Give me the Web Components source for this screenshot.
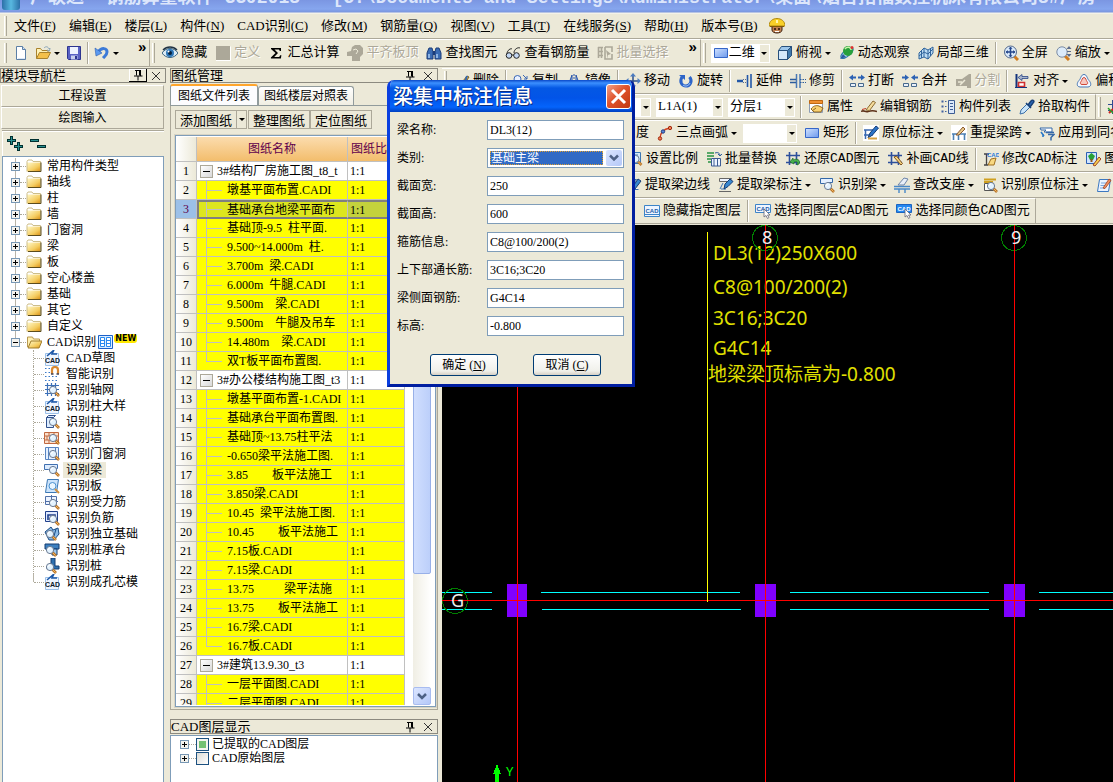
<!DOCTYPE html>
<html lang="zh-CN">
<head>
<meta charset="utf-8">
<title>广联达 钢筋算量软件 GGJ2013</title>
<style>
html, body {
    margin: 0;
    height: 100%;
    overflow: hidden;
}
body {
    background: #ece9d8;
    color: #000;
    font: 12px/16px "Liberation Serif", "Noto Sans CJK SC", serif;
}
</style>
</head>
<body>
<app-shell>
    <title-strip slot="title">广联达  钢筋算量软件 GGJ2013 - [C:\Documents and Settings\Administrator\桌面\烟台拓福数控机床有限公司3#厂房</title-strip>
    <menu-bar slot="menu"></menu-bar>

    <tool-row slot="tools">
        <tool-band>
            <tool-button icon="new" label="新建"></tool-button>
            <tool-button icon="open" label="打开" drop></tool-button>
            <tool-button icon="save" label="保存"></tool-button>
            <tool-sep></tool-sep>
            <tool-button icon="undo" label="撤销" drop></tool-button>
            <tool-more></tool-more>
        </tool-band>
        <tool-band>
            <tool-button icon="eye">隐藏</tool-button>
            <tool-button icon="graybox" disabled>定义</tool-button>
            <tool-button icon="sigma">汇总计算</tool-button>
            <tool-button icon="hand" disabled>平齐板顶</tool-button>
            <tool-button icon="binoculars">查找图元</tool-button>
            <tool-button icon="glasses">查看钢筋量</tool-button>
            <tool-button icon="batch" disabled>批量选择</tool-button>
            <tool-more></tool-more>
        </tool-band>
        <tool-band open>
            <tool-combo icon="rect" value="二维" style="--w:59px"></tool-combo>
            <tool-button icon="cube" drop>俯视</tool-button>
            <tool-button icon="orbit">动态观察</tool-button>
            <tool-button icon="part3d">局部三维</tool-button>
            <tool-sep></tool-sep>
            <tool-button icon="fullscreen">全屏</tool-button>
            <tool-button icon="zoom" drop>缩放</tool-button>
        </tool-band>
    </tool-row>

    <nav-panel slot="nav"></nav-panel>

    <side-stack slot="side">
        <drawing-panel></drawing-panel>
        <layer-panel></layer-panel>
    </side-stack>

    <work-area slot="work">
        <tool-row>
            <tool-band open>
                <tool-button icon="pen">删除</tool-button>
                <tool-sep></tool-sep>
                <tool-button icon="copy">复制</tool-button>
                <tool-button icon="mirror">镜像</tool-button>
                <tool-sep></tool-sep>
                <tool-button icon="move">移动</tool-button>
                <tool-button icon="rotate">旋转</tool-button>
                <tool-sep></tool-sep>
                <tool-button icon="extend">延伸</tool-button>
                <tool-button icon="trim">修剪</tool-button>
                <tool-sep></tool-sep>
                <tool-button icon="break">打断</tool-button>
                <tool-button icon="join">合并</tool-button>
                <tool-button icon="split" disabled>分割</tool-button>
                <tool-sep></tool-sep>
                <tool-button icon="align" drop>对齐</tool-button>
                <tool-button icon="offset">偏移</tool-button>
            </tool-band>
        </tool-row>
        <tool-row>
            <tool-band lead style="--lead:140px">
                <tool-combo label="构件类型" value="" style="--w:67px"></tool-combo>
                <tool-combo label="构件" value="L1A(1)" style="--w:67px"></tool-combo>
                <tool-combo label="分层" value="分层1" style="--w:67px"></tool-combo>
                <tool-sep></tool-sep>
                <tool-button icon="props">属性</tool-button>
                <tool-button icon="editbar">编辑钢筋</tool-button>
                <tool-button icon="list">构件列表</tool-button>
                <tool-button icon="dropper">拾取构件</tool-button>
            </tool-band>
            <tool-band open>
                <tool-button icon="axis" label="轴线"></tool-button>
            </tool-band>
        </tool-row>
        <tool-row>
            <tool-band open lead style="--lead:177px">
                <tool-button>角度</tool-button>
                <tool-button icon="arc" drop>三点画弧</tool-button>
                <tool-combo label="画弧方式" value="" style="--w:54px"></tool-combo>
                <tool-button icon="rect">矩形</tool-button>
                <tool-sep></tool-sep>
                <tool-button icon="notepen" drop>原位标注</tool-button>
                <tool-button icon="span" drop>重提梁跨</tool-button>
                <tool-button icon="apply">应用到同名梁</tool-button>
            </tool-band>
        </tool-row>
        <tool-row>
            <tool-band open lead style="--lead:181px">
                <tool-button icon="scale">设置比例</tool-button>
                <tool-button icon="replace">批量替换</tool-button>
                <tool-button icon="restore">还原CAD图元</tool-button>
                <tool-button icon="gridpen">补画CAD线</tool-button>
                <tool-sep></tool-sep>
                <tool-button icon="cadedit">修改CAD标注</tool-button>
                <tool-button icon="picedit">图片管理</tool-button>
            </tool-band>
        </tool-row>
        <tool-row>
            <tool-band open lead style="--lead:180px">
                <tool-button icon="edgepick">提取梁边线</tool-button>
                <tool-button icon="notepick" drop>提取梁标注</tool-button>
                <tool-button icon="beamfind" drop>识别梁</tool-button>
                <tool-button icon="support" drop>查改支座</tool-button>
                <tool-button icon="notefind" drop>识别原位标注</tool-button>
                <tool-button icon="pageedit">梁原位标注</tool-button>
            </tool-band>
        </tool-row>
        <tool-row>
            <tool-band lead style="--lead:198px">
                <tool-button icon="cadbox">隐藏指定图层</tool-button>
                <tool-sep></tool-sep>
                <tool-button icon="cadpick">选择同图层CAD图元</tool-button>
                <tool-button icon="cadpickblue">选择同颜色CAD图元</tool-button>
            </tool-band>
        </tool-row>
        <cad-canvas slot="canvas"></cad-canvas>
    </work-area>

    <beam-dialog slot="dialog" heading="梁集中标注信息"></beam-dialog>
</app-shell>

<script>
// small magnifier shared by the "识别" icons
const mag = (x, y) => `<path d="M${x + 2} ${y + 2}l4 4" stroke="#b8752a" stroke-width="2.6"/><path d="M${x + 3} ${y + 3}l2.6 2.6" stroke="#f4b860" stroke-width="1"/><circle cx="${x}" cy="${y}" r="3.6" fill="#e4f3ff" stroke="#6a7a92"/><path d="M${x - 2} ${y}a2 2 0 0 1 2-2" stroke="#fff" fill="none"/>`;
const cadTag = (x, y, c) => `<text x="${x}" y="${y}" font-family="Liberation Sans" font-size="6" font-weight="bold" fill="${c}">CAD</text>`;
const gridLines = '<path d="M4.5 1v13M11.5 1v13M1 4.5h14M1 11.5h14" stroke="#2c4f9c" stroke-width="1.6"/>';

const ICONS = {
    new: '<path d="M3.5 1.500h6l3 3v10h-9z" fill="#fff" stroke="#5b7fa6"/><path d="M9.500 1.500v3h3" fill="#cfe0f4" stroke="#5b7fa6"/><path d="M5 13.500h7" stroke="#dbe8f8"/>',
    open: '<path d="M1.500 13.500v-10h4l1.500 2h6v3" fill="#fff3b8" stroke="#a9822c"/><path d="M1.500 13.500l3-6h11l-3 6z" fill="#f4c04a" stroke="#a9822c"/><path d="M9 3c2-2 4-1.500 5 1l1-1-.5 3-2.500-1" fill="none" stroke="#8aa4b8"/>',
    save: '<path d="M1.500 1.500h13v13h-12l-1-1z" fill="#5a62c4" stroke="#2d3590"/><path d="M4 2h8v7h-8z" fill="#eef3ff"/><path d="M5 10.500h6.500v4h-6.500z" fill="#c9d0ee"/><path d="M9 11h2v3h-2z" fill="#2d3590"/>',
    undo: '<path d="M4 7c4-5 9-4 9 0 0 3-2 4-4 6" fill="none" stroke="#3d7bd8" stroke-width="3"/><path d="M1 3l1 8 6-3z" fill="#5b9af0" stroke="#2a5cb0" stroke-width=".6"/>',
    eye: '<path d="M0 8c4-6 12-6 16 0-4 6-12 6-16 0z" fill="#dcebf4" stroke="#3c6480"/><circle cx="8" cy="8" r="4" fill="#2d77b8"/><circle cx="8" cy="8" r="2" fill="#06203c"/><circle cx="6.500" cy="6.500" r="1" fill="#fff"/><path d="M1 5c4-4 10-4 14 0" fill="none" stroke="#234" stroke-width="1.500"/>',
    graybox: '<path d="M1 1h14v14h-14z" fill="#aca899"/><path d="M1 15.500h14.500v-14" fill="none" stroke="#fff"/>',
    sigma: '<path d="M3 3h10v3h-1.200l-.8-1.500h-4.500l3.500 3.500-3.800 4h5l1-1.800h1.200l-.5 3.300h-10v-1l4.600-4.600-4.500-4z" fill="#000"/>',
    hand: '<path d="M0 7l4-1 1-4 3-2h5l3 3v6l-3 3v4h-8v-5h-5z" fill="#aca899"/><path d="M6 5l3-1 2 2-2 3" stroke="#ece9d8" fill="none"/>',
    binoculars: '<path d="M1 14v-6l2-5h3l1 4v7zM9 14v-7l1-4h3l2 5v6z" fill="#3a6cb4" stroke="#1c3c78"/><path d="M7 6h2v4h-2z" fill="#1c3c78"/><path d="M3 9v4M11 9v4" stroke="#a8ccf4" stroke-width="1.500"/>',
    glasses: '<path d="M2 9c0-4 4-6 5-5M9 8c0-4 4-6 6-5" fill="none" stroke="#222"/><circle cx="4" cy="10.500" r="2.800" fill="#c4d8f4" stroke="#222"/><circle cx="11.500" cy="10.500" r="2.800" fill="#c4d8f4" stroke="#222"/><path d="M6.500 10h2.500" stroke="#222"/>',
    batch: '<path d="M1.500 2v11M4.500 2v11M1 2.500h5M1 6.500h5M1 10.500h5M8 2h7v5M8 2v12h7v-5" fill="none" stroke="#aca899" stroke-width="1.600"/><path d="M9 5l5 4-3 1v4z" fill="#aca899"/>',
    rect: '<path d="M1.500 3.500h13v9h-13z" fill="url(#g)" stroke="#3566c8"/>',
    cube: '<path d="M1.500 5.500l3-4h10v9l-4 4h-9z" fill="#9cc6ec" stroke="#28507c"/><path d="M1.500 5.500h9v9h-9z" fill="#d4e8fa" stroke="#28507c"/><path d="M10.500 5.500l4-4v9l-4 4z" fill="#3f78ac" stroke="#28507c"/>',
    orbit: '<ellipse cx="8" cy="8" rx="7.500" ry="3" transform="rotate(-40 8 8)" fill="#b8dcf0" stroke="#2c7ab0"/><circle cx="9" cy="6" r="5" fill="#28a03c"/><path d="M6 4c2-3 6-2 6 1" stroke="#c8f4a8" fill="none" stroke-width="1.500"/><path d="M1 14l3-5 3 3z" fill="#2c5ca0"/><circle cx="13" cy="2.500" r="1.500" fill="#e03030"/>',
    part3d: '<path d="M1 8l5-5 4 2 5-3v6l-5 6-4-2-5 2z" fill="#bcdcf4" stroke="#30649c"/><path d="M6 3v9M10 5v9M1 11l5-4 4 2 5-5M3.500 6v7M12.500 4v7" fill="none" stroke="#30649c"/>',
    fullscreen: '<path d="M11 11l4 4" stroke="#d07c20" stroke-width="3"/><circle cx="7.500" cy="7" r="6" fill="#dcebfa" stroke="#52688c"/><path d="M7.500 2.500v9M3 7h9" stroke="#23468c" stroke-width="1.500"/><path d="M7.500 1.800l-2 2h4zM7.500 12.200l-2-2h4zM2.800 7l2-2v4zM12.200 7l-2-2v4z" fill="#23468c"/>',
    zoom: '<path d="M9 11l4 4" stroke="#d07c20" stroke-width="3"/><circle cx="6" cy="7" r="5.200" fill="#dcebfa" stroke="#7c8ca4"/><path d="M13 1l-2.500 3h5zM13 12l-2.500-3h5z" fill="#5c6c8c"/><path d="M11 6.500h4" stroke="#5c6c8c"/>',
    pen: '<path d="M5 13l8-10 2 1-6 9z" fill="#f8c440" stroke="#80601c"/><path d="M13 3l-3 9" stroke="#3468b0" stroke-width="2"/><path d="M5 13l4 0" stroke="#333"/>',
    copy: '<circle cx="4.500" cy="6" r="3.500" fill="#e8f0ff" stroke="#3866b4"/><circle cx="11" cy="11.500" r="3" fill="#c8dcf8" stroke="#3866b4"/><path d="M10 2l4 4M14 3v3h-3" fill="none" stroke="#3866b4"/>',
    mirror: '<path d="M6 2v11l-4 0zM10 2v11h4z" fill="#a8c8f4" stroke="#2854a8"/><path d="M8 1v14" stroke="#2854a8" stroke-dasharray="2 1"/>',
    move: '<path d="M8 2v12M2 8h12" stroke="#2c4f8c" stroke-width="1.500"/><path d="M8 0l-3 3.500h6zM8 16l-3-3.500h6zM0 8l3.500-3v6zM16 8l-3.500-3v6z" fill="#4c7cc0"/>',
    rotate: '<path d="M4 4c-3 5 0 9 4 9s7-5 3.500-9" fill="none" stroke="#2c64c8" stroke-width="3"/><path d="M1 2h6v5z" fill="#2c64c8"/><path d="M5 12c2 2 6 1 7-2" stroke="#a8ccff" fill="none"/>',
    extend: '<path d="M0 8h6" stroke="#2358a8" stroke-width="2.500"/><path d="M6 6.500h4M6 9.500h4" stroke="#5c6c8c" stroke-dasharray="1 1"/><path d="M10.500 2v12M14 1v14" stroke="#2358a8" stroke-width="1.600"/>',
    trim: '<path d="M6.500 1v14M10 1v14" stroke="#4878b4" stroke-width="1.500"/><path d="M0 6.500h6M0 9.500h6" stroke="#2c5c9c" stroke-width="1.300"/><path d="M10 6.500h6M10 9.500h6" stroke="#2c5c9c" stroke-dasharray="1.500 1"/>',
    break: '<path d="M0 4.500l4-3v2h3v2h-3v2zM16 4.500l-4-3v2h-3v2h3v2z" fill="#2c62b4"/><path d="M1.500 10.500h5v3h-5zM9.500 10.500h5v3h-5z" fill="#e8f0fa" stroke="#46688c"/>',
    join: '<path d="M7 4.500l-4-3v2h-3v2h3v2zM9 4.500l4-3v2h3v2h-3v2z" fill="#2c62b4"/><path d="M1.500 10.500h5v3h-5zM9.500 10.500h5v3h-5z" fill="#e8f0fa" stroke="#46688c"/>',
    split: '<path d="M1 6h6l7-5h2v14h-4v-2h-11z" fill="#aca899"/><path d="M3 9h4M5 12l5-5" stroke="#ece9d8" stroke-width="1.500" fill="none"/>',
    align: '<path d="M2.500 1v14" stroke="#14347c" stroke-width="2"/><path d="M4 4.500l4-3v2h6v2h-6v2z" fill="#a8b4cc" stroke="#14347c" stroke-width=".7"/><path d="M4.500 9.500h6v4h-6z" fill="#fff" stroke="#d03030" stroke-width="1.600"/><path d="M1 14.500h12" stroke="#14347c"/>',
    offset: '<path d="M8 1.500c3 0 3 4 5 6s3 6-1 6.500h-8c-4-.5-3-4.500-1-6.500s2-6 5-6z" fill="#f4f8ff" stroke="#4878b4"/><path d="M8 4.500c2 0 2 3 3 4s1 3-1 3h-4c-2 0-2-2-1-3s1-4 3-4z" fill="#f8c8c0" stroke="#d04838"/>',
    props: '<path d="M1.500 1.500h13v12h-13z" fill="#fff" stroke="#8c9cb4"/><path d="M1.500 1.500h13v3h-13z" fill="#f09030" stroke="#c06810"/><path d="M3 10c2-3 5-4 8-3l4 2-2 4h-7z" fill="#f8d070" stroke="#8c6420"/><path d="M4 12l4-3" stroke="#8c6420"/>',
    editbar: '<path d="M0 12.500c3-2 4 1 7 0s6-1 9 0" fill="none" stroke="#5c3018" stroke-width="1.500"/><path d="M5 11l7-9 2.500 1.500-6 8z" fill="#f4dc9c" stroke="#8a6a30"/><path d="M1 10.500l4-1" stroke="#c03820"/>',
    list: '<path d="M1.500 2.500h2M1.500 7.500h2M1.500 12.500h2" stroke="#4060a0" stroke-width="2"/><path d="M5 2.500h1.500M5 7.500h1.500M5 12.500h1.500" stroke="#4060a0"/><path d="M8.500 1.500h6v13h-6z" fill="#dce8fa" stroke="#3c5c94"/><path d="M10 4.500h3M10 7.500h3M10 10.500h3" stroke="#3c5c94"/>',
    dropper: '<path d="M1 15l1-4 6-6 3 3-6 6z" fill="#c8e4fa" stroke="#3c70a8"/><path d="M7 4l5 5M9 6l3-4c2-2 4 0 2 2l-3 4" stroke="#184078" stroke-width="1.500" fill="#2c68b8"/>',
    axis: '<path d="M5.500 1v14M1 5.500h14M1 11.500h14M11.500 1v14" stroke="#304c90"/><path d="M2 14l4-4" stroke="#d02020" stroke-width="2"/><path d="M1 9l5 5" stroke="#28a028" stroke-width="1.500"/>',
    arc: '<path d="M3 14c0-6 3-10 10-11" fill="none" stroke="#d04020" stroke-width="1.300"/><circle cx="3" cy="13.500" r="1.700" fill="#f08050" stroke="#a02810"/><circle cx="6" cy="6.500" r="1.700" fill="#5888d8" stroke="#203c80"/><circle cx="13" cy="3" r="1.700" fill="#f08050" stroke="#a02810"/>',
    notepen: '<path d="M0 0h16v16h-16z" fill="#fff"/><path d="M1 5h9M1 10h9M2.500 5v9" stroke="#3868b0" stroke-width="1.500"/><path d="M5 13l2-5 6-7 2.500 2-6 7z" fill="#2c74c8" stroke="#163c74"/><path d="M5 13.500h9" stroke="#d8a040" stroke-width="2"/>',
    span: '<path d="M0 0h16v16h-16z" fill="#fff"/><path d="M1 9h14M2.500 9v6M7.500 9v6M13.500 9v6" stroke="#4c80b4" stroke-width="1.600"/><path d="M5 10l7-8 2 2-6 6z" fill="#e8c888" stroke="#8a5a30"/>',
    apply: '<path d="M1 3h12v4h-8l2-2h-5z" fill="#fff" stroke="#3468a8"/><path d="M7 7.500h8M9 9.500h6l-3 3v3" fill="none" stroke="#3468a8" stroke-width="1.500"/><path d="M2 7l3 4M4 9v3" stroke="#2878c8" stroke-width="1.600"/>',
    scale: '<path d="M1.500 1.500h12v11h-12z" fill="#d4e8fa" stroke="#3c78b4"/><path d="M3 4h8M3 6.500h5" stroke="#3c78b4"/>' + mag(8.5, 8),
    replace: '<path d="M1 1h7v2h-7zM1 4h7v2h-7zM1 7h4v2h-4zM2 10h3v2h-3z" fill="#58a868"/><path d="M9 2c3-1 5 0 5 3M12 3l2 2 2-2" fill="none" stroke="#2c5c9c"/><path d="M5.500 7.500h9v7.500h-9z" fill="#eef4ff" stroke="#3c5c94"/><path d="M8 8v7M11.500 8v7" stroke="#3c5c94"/>',
    restore: gridLines + '<path d="M14 13c2-4-2-6-6-4l0-2-3 4 4 2 0-2c3-1 4 0 3 3z" fill="#48b050" stroke="#1c6c24" stroke-width=".7"/>',
    gridpen: gridLines + '<path d="M7 6l7 8 1.500-1.500-6-7.500z" fill="#f4d480" stroke="#80501c"/>',
    cadedit: '<path d="M1 3h5M3.500 3v11M1 14h4" stroke="#444" stroke-width="1.300"/>' + cadTag(4, 6, '#2878d8') + '<path d="M5 14l3-6 5-1-2 7z" fill="#f8d880" stroke="#a07020"/>',
    picedit: '<path d="M1.500 1.500h10v11h-10z" fill="#cfe4ff" stroke="#2c60b4"/><path d="M3 5l3.500-3 3.500 3-2 4h-3z" fill="#28a038"/><path d="M6.500 8v3" stroke="#8a5a20" stroke-width="2"/><path d="M8 14l6-8 2 2-6 7z" fill="#f8d050" stroke="#a04820"/>',
    edgepick: '<path d="M1.500 2.500h9l-2 3h-5v7h9" fill="#fff" stroke="#3468a8"/><path d="M6 11l6-9 3 2-6 8z" fill="#3888d0" stroke="#163c74"/>',
    notepick: '<path d="M1.500 1.500h12l-2 3h-10z" fill="#eef4ff" stroke="#666"/><path d="M1 14.500h12" stroke="#666"/><path d="M2 12l3-6M3 12h5" stroke="#3c74b4"/><path d="M6 12l1-5 5-5 3 2.500-5 5z" fill="#3888d0" stroke="#163c74"/>',
    beamfind: '<path d="M1.500 1.500h12v4h-4v5l-4-4h-4z" fill="#e4f0ff" stroke="#3468a8"/>' + mag(9, 9),
    support: '<path d="M0 9.500h16M0 12h16M5 12v4M11 12v4" stroke="#4888c8" stroke-width="1.400"/><path d="M4 8l6-7 4 1-4 6z" fill="#e8eef8" stroke="#6c84a8"/>',
    notefind: '<path d="M2 2.500h12M2 5h9" stroke="#d0a020" stroke-width="2"/><path d="M2.500 6.500h9v7h-9z" fill="#fff" stroke="#555"/>' + mag(9, 9),
    pageedit: '<path d="M3.500 2.500h11l-2 12h-11z" fill="#eaf3ff" stroke="#3c78c0"/><path d="M5 6h6M4.500 8.500h6M4 11h5" stroke="#78a4dc"/><path d="M7 11l6-9 2 1.500-6 8z" fill="#f09060" stroke="#a04020" stroke-width=".8"/>',
    cadbox: '<path d="M.5 2.500h15v11h-15z" fill="#eef5ff" stroke="#3c84c8"/><path d="M.5 11.500h15" stroke="#3c84c8"/>' + cadTag(1.5, 10, '#1c5ca8'),
    cadpick: '<path d="M.5 1.500h15v8h-15z" fill="#eef5ff" stroke="#3c84c8"/>' + cadTag(1.5, 7.5, '#1c5ca8') + '<path d="M9 6v8l2-1.500 1.500 3 1.500-1-1.500-2.500h2.500z" fill="#fff" stroke="#667" stroke-width=".8"/>',
    cadpickblue: '<path d="M.5 1.500h15v8h-15z" fill="#2488f0" stroke="#1c64c0"/>' + cadTag(1.5, 7.5, '#fff') + '<path d="M9 6v8l2-1.500 1.500 3 1.500-1-1.500-2.500h2.500z" fill="#fff" stroke="#667" stroke-width=".8"/>',
    worker: '<path d="M3 7h10v5c0 4-10 4-10 0z" fill="#c08050" stroke="#3c2010"/><path d="M0 8c0-10 16-10 16 0z" fill="#f8d028" stroke="#b08810"/><path d="M1 8.500h14" stroke="#805808"/><path d="M7 2h2v3h-2z" fill="#fff8b0"/><circle cx="6" cy="11" r="1" fill="#201008"/><circle cx="10" cy="11" r="1" fill="#201008"/><path d="M6 13.500h4" stroke="#fff"/>',
    folder: '<path d="M1 13.500v-9h14v9z" fill="url(#f)"/><path d="M1 13.500v-10l1-1.500h4l1 1.500h7.500v10" fill="none" stroke="#cdbd88"/><path d="M2 13.500h13v-9" stroke="#5c4c1c" fill="none"/>',
    folderopen: '<path d="M1.500 13v-10h5l1 2h6v3" fill="#fff0b0" stroke="#b89850"/><path d="M2 14l3-7h11l-3 7z" fill="url(#f)" stroke="#a07c2c"/>',
    book: '<path d="M.5 1.500h14v13h-14z" fill="#dceeff" stroke="#1c60c8"/><path d="M2.500 3.500h4v9h-4zM8.500 3.500h4v9h-4z" fill="#fff" stroke="#2888f0"/><path d="M3 6.500h3M3 9.500h3M9 6.500h3M9 9.500h3" stroke="#2888f0"/>',
    cad: '<path d="M1.500 3.500h13v12h-13z" fill="#eef5ff" stroke="#9cc0e8"/><path d="M3 6l7-6-2 4h5" stroke="#1c58a8" stroke-width="1.500" fill="none"/><text x="1" y="13" font-family="Liberation Sans" font-size="7" font-weight="bold" fill="#101828">CAD</text>',
    smart: '<path d="M1 2.500h8M1 6.500h8M1 10.500h14M1 14.500h14" stroke="#3878c8" stroke-dasharray="1.500 2"/><path d="M8 8v-4c0-4 6-4 6 0v4" fill="none" stroke="#d88830" stroke-width="2.200"/><path d="M7 8h2.500M12.500 8h2.500" stroke="#445" stroke-width="1.500"/>',
    net: '<path d="M3.500 1v13M7.500 1v13M11.500 1v13M1 3.500h14M1 7.500h14M1 11.500h14" stroke="#3c70b8" stroke-width="1.200"/>' + mag(9, 8),
    column: '<path d="M2.500 3.500l2-2h7l-2 2v10h-7z" fill="#dcecff" stroke="#30508c"/><path d="M2.500 3.500h7" stroke="#30508c"/>' + mag(9, 8),
    wall: '<path d="M.5 2.500h14v11h-14z" fill="#fbe0cc" stroke="#c06840"/><path d="M1 6h14M1 10h14M5 3v3M10 3v3M3 6v4M8 6v4M5 10v3" stroke="#c06840"/>' + mag(9, 8),
    door: '<path d="M1.500 1.500h13v12h-13z" fill="#e4f0ff" stroke="#5884c0"/><path d="M4.500 2v11M11.500 2v11" stroke="#5884c0"/>' + mag(9, 8),
    beam: '<path d="M.5 2.500h13v4h-5v5l-4-4h-4z" fill="#dcecff" stroke="#4070b0"/>' + mag(9, 8),
    slab: '<path d="M3.500 1.500h11l-2 13h-11z" fill="#cce4fc" stroke="#3c78b4"/><circle cx="8.500" cy="8" r="3.500" fill="#eaf6ff" stroke="#4890d0"/><path d="M11 11l4 4" stroke="#d09040" stroke-width="2"/>',
    force: '<path d="M1.500 2.500h11v8h-11z" fill="#eef4ff" stroke="#5070a8"/><path d="M1 7.500h13M7.500 1v9" stroke="#5070a8"/>' + mag(9, 9),
    neg: '<path d="M1.500 1.500h12v10h-12z" fill="#e0eaff" stroke="#20408c"/><path d="M4 10v-5h7v5" fill="none" stroke="#20408c" stroke-width="1.600"/>' + mag(9, 9),
    pad: '<path d="M1 6l6-5 2 3 5-2 1 6-5 6h-5z" fill="#8cbce8" stroke="#1c4c84"/><path d="M8 4v6M12 3l-2 7M3 6l5 4" stroke="#1c4c84"/>' + mag(6, 8),
    cap: '<path d="M1 2h14v5h-14z" fill="#3c80c0" stroke="#143c70"/><path d="M8 7h5v6h-5z" fill="#9cc8f0" stroke="#143c70"/>' + mag(6, 8),
    pile: '<path d="M7 0h4v8h4v3h-12v-3h4z" fill="#2c70b0" stroke="#143c70"/>' + mag(6, 9),
    plusplus: '<path d="M4.500 0v9M0 4.500h9M11.500 6v9M7 10.500h9" stroke="#003030" stroke-width="3"/><path d="M4.500 1v7M1 4.500h7M11.500 7v7M8 10.500h7" stroke="#289090"/>',
    minusminus: '<path d="M0 4.500h9M7 10.500h9" stroke="#003030" stroke-width="3"/><path d="M1 4.500h7M8 10.500h7" stroke="#289090"/>',
    pin: '<path d="M5 3.500h6M6.500 3.500v5M9.500 3.500v5M10.500 3v6M4 9h8.500M8 9v4.500" fill="none" stroke="#000"/>',
    close: '<path d="M4 4l8 8M12 4l-8 8" stroke="#333"/>'
};

class SvgIcon extends HTMLElement {
    connectedCallback () {
        if (this.shadowRoot) return;
        this.attachShadow({ mode: 'open' }).innerHTML = `
<style>
:host { display: block; flex: none; width: 16px; height: 16px; }
svg { display: block; width: 16px; height: 16px; overflow: hidden; }
</style>
<svg viewBox="0 0 16 16" fill="none" aria-hidden="true">
<defs>
<linearGradient id="g" x2="1" y2="1"><stop stop-color="#d0e2ff"/><stop offset="1" stop-color="#6c98ec"/></linearGradient>
<linearGradient id="f" x2="1" y2="1"><stop stop-color="#fff8c8"/><stop offset=".6" stop-color="#f4cc60"/><stop offset="1" stop-color="#d88c10"/></linearGradient>
</defs>${ICONS[this.getAttribute('name')] || ''}</svg>`;
    }
}
customElements.define('svg-icon', SvgIcon);

// registers an element whose shadow root is built once from a render function
function define (name, render) {
    customElements.define(name, class extends HTMLElement {
        connectedCallback () {
            if (this.shadowRoot) return;
            const template = document.createElement('template');
            template.innerHTML = render(this);
            this.attachShadow({ mode: 'open' }).appendChild(template.content.cloneNode(true));
        }
    });
}

define('app-shell', () => `
<style>
:host {
    display: grid;
    height: 100vh;
    grid-template-columns: 166px 272px minmax(0, 1fr);
    grid-template-rows: auto auto auto minmax(0, 1fr);
    column-gap: 2px;
    overflow: hidden;
}
.full { grid-column: 1 / -1; min-width: 0; }
.cell { min-width: 0; min-height: 0; display: grid; }
</style>
<header class="full"><slot name="title"></slot></header>
<div class="full"><slot name="menu"></slot></div>
<div class="full"><slot name="tools"></slot></div>
<div class="cell"><slot name="nav"></slot></div>
<div class="cell"><slot name="side"></slot></div>
<div class="cell"><slot name="work"></slot></div>
<slot name="dialog"></slot>
`);

define('title-strip', () => `
<style>
:host {
    display: flex;
    align-items: flex-end;
    gap: 10px;
    box-sizing: border-box;
    height: 14px;
    padding: 0 0 4px 2px;
    overflow: hidden;
    white-space: pre;
    color: #dce6fb;
    font: bold 18px/24px "Liberation Mono", "Noto Sans CJK SC", monospace;
    background: linear-gradient(#7b96e2, #86a6ee 9px, #7a96df 12px, #f4f2e8 13px);
}
i { width: 18px; height: 10px; border-radius: 0 0 3px 3px; background: linear-gradient(90deg, #2c70a8, #58b8e0 50%, #2c70a8); }
</style>
<i></i><span><slot></slot></span>
`);

const MENUS = ['文件(F)', '编辑(E)', '楼层(L)', '构件(N)', 'CAD识别(C)', '修改(M)', '钢筋量(Q)', '视图(V)', '工具(T)', '在线服务(S)', '帮助(H)', '版本号(B)'];
define('menu-bar', () => `
<style>
:host {
    display: flex;
    align-items: center;
    gap: 1px;
    height: 24px;
    padding-left: 4px;
    font-size: 13px;
    border-bottom: 1px solid #aca899;
    box-shadow: 0 1px #fff;
}
.grip { width: 1px; height: 20px; border-left: 1px solid #fff; border-right: 1px solid #aca899; }
button { font: inherit; border: 0; background: none; padding: 0 6px; white-space: nowrap; }
svg-icon { margin-left: 5px; }
</style>
<span class="grip"></span>
${MENUS.map(m => `<button>${m.replace(/\((.)\)/, '(<u>$1</u>)')}</button>`).join('')}
<svg-icon name="worker"></svg-icon>
`);

define('tool-row', () => `
<style>
:host { display: flex; height: 25px; overflow: hidden; border-bottom: 1px solid #aca899; min-width: 0; }
:host([slot=tools]) { height: 27px; padding-left: 2px; }
</style>
<slot></slot>
`);

define('tool-band', () => `
<style>
:host {
    display: flex;
    align-items: center;
    flex: none;
    border-top: 1px solid #fff;
    border-right: 1px solid #aca899;
    padding-right: 1px;
    font: 13px/18px "Liberation Mono", "Noto Sans CJK SC", monospace;
}
:host([open]) { border-right: 0; flex: 1 0 auto; }
:host([lead]) { padding-left: var(--lead); }
:host([lead]) .grip { display: none; }
.grip { width: 1px; height: 20px; margin: 0 3px 0 2px; border-left: 1px solid #fff; border-right: 1px solid #aca899; }
</style>
<span class="grip"></span><slot></slot>
`);

define('tool-sep', () => `
<style>
:host { display: block; width: 1px; height: 22px; margin: 0 2px; background: #aca899; border-right: 1px solid #fff; }
</style>
`);

define('tool-more', () => `
<style>
:host { display: block; align-self: flex-start; margin-left: 14px; }
button { border: 0; padding: 0 2px; background: none; font: bold 15px/14px "Liberation Sans", sans-serif; }
</style>
<button aria-label="更多">»</button>
`);

define('tool-button', (el) => `
<style>
:host { display: block; flex: none; }
button {
    display: flex;
    align-items: center;
    gap: 3px;
    padding: 0 4px;
    border: 0;
    background: none;
    color: #000;
    font: inherit;
    white-space: nowrap;
}
:host([label]) button { padding: 0 3px; }
button:disabled { color: #aca899; text-shadow: 1px 1px #fff; }
.drop { border: 3px solid transparent; border-top-color: #000; border-bottom: 0; }
</style>
<button ${el.hasAttribute('disabled') ? 'disabled' : ''} ${el.hasAttribute('label') ? `aria-label="${el.getAttribute('label')}"` : ''}>
${el.hasAttribute('icon') ? `<svg-icon name="${el.getAttribute('icon')}"></svg-icon>` : ''}
${el.textContent ? '<span><slot></slot></span>' : ''}
${el.hasAttribute('drop') ? '<span class="drop"></span>' : ''}
</button>
`);

define('tool-combo', (el) => `
<style>
:host { display: flex; align-items: center; flex: none; box-sizing: border-box; width: var(--w); height: 19px; margin: 0 3px 0 2px; padding-left: 2px; background: #fff; }
select {
    appearance: none;
    flex: 1;
    min-width: 0;
    height: 19px;
    padding: 0 0 3px;
    border: 0;
    background: none;
    color: #000;
    font: 13px/16px "Liberation Serif", "Noto Sans CJK SC", serif;
}
.btn { display: flex; align-items: center; justify-content: center; width: 9px; height: 17px; margin-right: 1px; background: #ece9d8; }
.btn:before { content: ""; border: 3px solid transparent; border-top-color: #000; border-bottom: 0; }
</style>
${el.hasAttribute('icon') ? `<svg-icon name="${el.getAttribute('icon')}"></svg-icon>` : ''}
<select aria-label="${el.getAttribute('label') || '视图'}"><option>${el.getAttribute('value')}</option></select><span class="btn"></span>
`);

define('panel-head', () => `
<style>
:host {
    display: flex;
    align-items: center;
    height: 13px;
    border: 1px solid #8c8a80;
    overflow: hidden;
    font-size: 13px;
    line-height: 13px;
    white-space: nowrap;
}
span { flex: 1; }
button { display: flex; align-items: center; justify-content: center; width: 18px; height: 13px; padding: 0; border: 0; background: none; overflow: hidden; }
:host([raised]) button:first-of-type { border: solid #000; border-width: 0 1px 1px 0; box-shadow: inset 1px 1px #fff; }
</style>
<span><slot></slot></span>
<button aria-label="固定"><svg-icon name="pin"></svg-icon></button>
<button aria-label="关闭"><svg-icon name="close"></svg-icon></button>
`);

const FOLDERS = ['常用构件类型', '轴线', '柱', '墙', '门窗洞', '梁', '板', '空心楼盖', '基础', '其它', '自定义'];
const CAD_ITEMS = [
    ['cad', 'CAD草图'], ['smart', '智能识别'], ['net', '识别轴网'], ['cad', '识别柱大样'], ['column', '识别柱'],
    ['wall', '识别墙'], ['door', '识别门窗洞'], ['beam', '识别梁'], ['slab', '识别板'], ['force', '识别受力筋'],
    ['neg', '识别负筋'], ['pad', '识别独立基础'], ['cap', '识别桩承台'], ['pile', '识别桩'], ['cad', '识别成孔芯模']
];
define('nav-panel', () => `
<style>
:host { display: flex; flex-direction: column; min-height: 0; padding-top: 1px; }
.wide {
    height: 22px;
    border: 1px solid;
    border-color: #fff #aca899 #aca899 #fff;
    background: #ece9d8;
    font: inherit;
    padding: 0;
    margin: 0 2px 0 1px;
}
.wide:first-of-type { margin-top: 2px; }
.tools { display: flex; align-items: center; gap: 7px; height: 25px; margin: 1px 2px 0; padding-left: 5px; border-top: 1px solid #aca899; box-shadow: inset 1px 1px #fff; }
ul { list-style: none; margin: 0; padding: 0; }
.tree { flex: 1; margin: 0 2px; padding: 1px 0 0 8px; background: #fff; border: 1px solid #7f9db9; border-bottom: 0; overflow: hidden; }
.row { display: flex; align-items: center; height: 16px; white-space: nowrap; background: linear-gradient(#b8b4a8, #b8b4a8) 4px 0 / 1px 100% no-repeat; }
.box {
    width: 7px;
    height: 7px;
    flex: none;
    border: 1px solid #7898b5;
    background: linear-gradient(#000, #000) center / 5px 1px no-repeat, linear-gradient(#000, #000) center / 1px 5px no-repeat, #f4f3ee;
}
.open .box { background: linear-gradient(#000, #000) center / 5px 1px no-repeat, #f4f3ee; }
.open.row { background-size: 1px 50%; }
.dots { width: 6px; flex: none; border-top: 1px dotted #aca899; }
.row span { margin-left: 5px; }
.kids { margin-left: 22px; }
.kids .row { background: none; border-left: 1px dotted #aca899; box-sizing: border-box; }
.kids .row:last-child { border-image: linear-gradient(#b8b4a8 50%, transparent 50%) 1; }
.kids .dots { width: 10px; }
.kids span { margin-left: 3px; padding: 0 4px 0 3px; line-height: 16px; }
.kids .on span { background: #ece9d8; }
.row .new { margin-left: 0; padding: 0 1px; align-self: flex-start; background: #ffe800; border-radius: 3px; font: bold 8px/9px "DejaVu Sans", sans-serif; }
.row .book { margin-left: 2px; }
</style>
<panel-head raised>模块导航栏</panel-head>
<button class="wide">工程设置</button>
<button class="wide">绘图输入</button>
<div class="tools"><svg-icon name="plusplus"></svg-icon><svg-icon name="minusminus"></svg-icon></div>
<ul class="tree">
${FOLDERS.map(f => `<li class="row"><i class="box"></i><i class="dots"></i><svg-icon name="folder"></svg-icon><span>${f}</span></li>`).join('')}
<li>
<div class="row open"><i class="box"></i><i class="dots"></i><svg-icon name="folderopen"></svg-icon><span>CAD识别</span><svg-icon class="book" name="book"></svg-icon><span class="new">NEW</span></div>
<ul class="kids">
${CAD_ITEMS.map(([icon, text]) => `<li class="row${text === '识别梁' ? ' on' : ''}"><i class="dots"></i><svg-icon name="${icon}"></svg-icon><span>${text}</span></li>`).join('')}
</ul>
</li>
</ul>
`);

define('side-stack', () => `
<style>
:host { display: flex; flex-direction: column; gap: 9px; min-height: 0; padding: 1px 2px 0 2px; }
::slotted(drawing-panel) { flex: 1; min-height: 0; }
</style>
<slot></slot>
`);

// [level, name]; level 0 is a file, 1 a sheet, 2 the last sheet of its file
const DRAWINGS = [
    [0, '3#结构厂房施工图_t8_t'], [1, '墩基平面布置.CADI'], [1, '基础承台地梁平面布'], [1, '基础顶-9.5 柱平面.'],
    [1, '9.500~14.000m 柱.'], [1, '3.700m 梁.CADI'], [1, '6.000m 牛腿.CADI'], [1, '9.500m  梁.CADI'],
    [1, '9.500m  牛腿及吊车'], [1, '14.480m  梁.CADI'], [2, '双T板平面布置图.'],
    [0, '3#办公楼结构施工图_t3'], [1, '墩基平面布置-1.CADI'], [1, '基础承台平面布置图.'], [1, '基础顶~13.75柱平法'],
    [1, '-0.650梁平法施工图.'], [1, '3.85    板平法施工'], [1, '3.850梁.CADI'], [1, '10.45 梁平法施工图.'],
    [1, '10.45    板平法施工'], [1, '7.15板.CADI'], [1, '7.15梁.CADI'], [1, '13.75     梁平法施'],
    [1, '13.75    板平法施工'], [1, '16.7梁.CADI'], [2, '16.7板.CADI'],
    [0, '3#建筑13.9.30_t3'], [1, '一层平面图.CADI'], [1, '二层平面图.CADI']
];
define('drawing-grid', () => `
<style>
:host { display: flex; min-height: 0; overflow: hidden; background: #fff; border: 1px solid #7f9db9; box-shadow: 0 0 0 1px #d8d4c4; padding: 1px 4px 1px 0; }
.view { flex: 1; min-width: 0; overflow: hidden; }
table { border-collapse: separate; border-spacing: 0; table-layout: fixed; width: 229px; }
th, td { box-sizing: border-box; padding: 0; border: solid #c0c0c0; border-width: 0 1px 1px 0; font-weight: normal; white-space: nowrap; overflow: hidden; }
thead th { height: 25px; background: linear-gradient(#fbdcae, #f3bd6c); color: #60004c; }
thead th:first-child, tbody th { background: linear-gradient(90deg, #fff, #ece9d8); }
thead th:last-child { text-align: left; padding-left: 3px; }
tbody tr { height: 19px; background: #ff0; line-height: 16px; }
tr.top { background: #fff; }
td.name { padding-left: 30px; }
tr.sub td.name {
    background: linear-gradient(#c0c0c0, #c0c0c0) 9px 0 / 1px 100% no-repeat, linear-gradient(#c0c0c0, #c0c0c0) 9px 9px / 16px 1px no-repeat;
}
tr.last td.name { background-size: 1px 50%, 16px 1px; }
tr.top td.name { padding-left: 3px; }
.name button {
    width: 13px;
    height: 13px;
    margin-right: 4px;
    padding: 0;
    vertical-align: -2px;
    border: 1px solid #aca899;
    background: linear-gradient(#000, #000) center / 7px 1px no-repeat, linear-gradient(135deg, #fff, #d8d8d8);
}
td.ratio { padding-left: 2px; }
tr.sel td { border-bottom: 2px solid #808080; border-top: 2px solid #808080; line-height: 14px; }
tr.sel td.name { border-left: 2px solid #808080; padding-left: 28px; background-color: #dde61e; background-position: 7px 0, 7px 7px; }
tr.sel td.ratio { background: #c4d23c; }
tr.sel th { background: #9cc0e8; color: #60004c; }
.bar { display: flex; flex-direction: column; width: 18px; background: linear-gradient(90deg, #f0eee4, #fff); }
.thumb { flex: 0 0 77%; box-sizing: border-box; border: 1px solid #98b0e8; border-radius: 2px; background: linear-gradient(90deg, #d0defe, #bccffa); }
.track { flex: 1; }
.down { width: 18px; height: 18px; padding: 0; border: 1px solid #a8bcf0; border-radius: 2px; background: linear-gradient(135deg, #dce6ff, #b4c8f8); }
.down svg { display: block; margin: auto; }
</style>
<div class="view">
<table>
<colgroup><col style="width:21px"><col style="width:151px"><col style="width:57px"></colgroup>
<thead><tr><th></th><th>图纸名称</th><th>图纸比例</th></tr></thead>
<tbody>
${DRAWINGS.map(([level, name], i) => `<tr class="${['top', 'sub', 'sub last'][level]}${i === 2 ? ' sel' : ''}"><th>${i + 1}</th><td class="name">${level ? '' : '<button aria-label="折叠"></button>'}${name.replace(/ /g, '\u2002')}</td><td class="ratio">1:1</td></tr>`).join('')}
</tbody>
</table>
</div>
<div class="bar"><div class="thumb"></div><div class="track"></div><button class="down" aria-label="向下"><svg width="10" height="10" viewBox="0 0 10 10"><path d="M1 3l4 4 4-4" fill="none" stroke="#4d6185" stroke-width="2.500"/></svg></button></div>
`);

define('drawing-panel', () => `
<style>
:host { display: flex; flex-direction: column; }
.tabs { display: flex; align-items: flex-end; height: 21px; margin-top: 1px; border-bottom: 1px solid #919b9c; }
.tabs button { box-sizing: border-box; height: 19px; padding: 0 5px; border: 1px solid #919b9c; border-bottom: 0; border-radius: 3px 3px 0 0; background: linear-gradient(#fff, #f0eee2); font: inherit; white-space: nowrap; }
.tabs button.on { height: 21px; padding: 0 7px; border-top: 2px solid #ffa52c; background: #fcfcfe; }
.tools { display: flex; height: 19px; margin: 4px 4px 6px 4px; }
.tools button { box-sizing: border-box; width: 62px; height: 19px; padding: 0; border: 1px solid #aca899; background: #ece9d8; font: 13px/16px "Noto Sans CJK SC", sans-serif; white-space: nowrap; }
.tools .drop { width: 10px; margin-right: 1px; border-left: 0; display: flex; align-items: center; justify-content: center; }
.drop:before { content: ""; border: 3px solid transparent; border-top-color: #000; border-bottom: 0; }
drawing-grid { flex: 1; margin: 0 1px 2px 4px; }
.page { display: flex; flex-direction: column; flex: 1; min-height: 0; border: 1px solid #aca899; border-top: 0; }
</style>
<panel-head>图纸管理</panel-head>
<div class="tabs"><button class="on">图纸文件列表</button><button>图纸楼层对照表</button></div>
<div class="page">
<div class="tools"><button>添加图纸</button><button class="drop" aria-label="添加方式"></button><button>整理图纸</button><button>定位图纸</button></div>
<drawing-grid></drawing-grid>
</div>
`);

define('layer-panel', () => `
<style>
:host { display: block; height: 63px; }
.body { height: 48px; margin-top: 1px; padding: 1px 0 0 9px; box-sizing: border-box; background: #fff; border: 1px solid #7f9db9; border-bottom: 0; }
label { display: flex; align-items: center; height: 14px; line-height: 14px; white-space: nowrap; }
.box { width: 7px; height: 7px; border: 1px solid #7898b5; background: linear-gradient(#000, #000) center / 5px 1px no-repeat, linear-gradient(#000, #000) center / 1px 5px no-repeat, #f4f3ee; }
.dots { width: 7px; border-top: 1px dotted #aca899; }
input { appearance: none; width: 13px; height: 13px; margin: 0 3px 0 0; border: 1px solid #1c5180; background: linear-gradient(135deg, #dcdcd7, #fff); }
input:checked { background: linear-gradient(#73c173, #73c173) center / 7px 7px no-repeat, #f4f4f0; }
</style>
<panel-head>CAD图层显示</panel-head>
<div class="body">
<label><i class="box"></i><i class="dots"></i><input type="checkbox" checked>已提取的CAD图层</label>
<label><i class="box"></i><i class="dots"></i><input type="checkbox">CAD原始图层</label>
</div>
`);

define('work-area', () => `
<style>
:host { display: flex; flex-direction: column; min-width: 0; min-height: 0; }
.bars { flex: none; padding: 1px 0; }
::slotted(cad-canvas) { flex: 1; min-height: 0; }
</style>
<div class="bars"><slot></slot></div>
<slot name="canvas"></slot>
`);

define('cad-canvas', () => `
<style>
:host { display: block; background: #000; overflow: hidden; }
svg { display: block; width: 100%; height: 100%; font-family: "Noto Sans", "Noto Sans CJK SC", sans-serif; }
.note { fill: #e0e000; font-size: 19px; }
.mark { fill: #f0f0f0; font-size: 18px; }
</style>
<svg shape-rendering="crispEdges" fill="none">
<g fill="#8000ff"><rect x="65" y="359" width="20" height="33"/><rect x="313" y="359" width="21" height="33"/><rect x="562" y="359" width="21" height="33"/></g>
<path d="M0 367.500h50M99 367.500h199M348 367.500h199M597 367.500h2000M0 384.500h50M100 384.500h199M348 384.500h199M597 384.500h2000" stroke="#0ff"/>
<g class="note">
<text x="271" y="35">DL3(12)250X600</text>
<text x="271" y="69">C8@100/200(2)</text>
<text x="271" y="100">3C16;3C20</text>
<text x="271" y="130">G4C14</text>
<text x="266" y="156">地梁梁顶标高为-0.800</text>
</g>
<g stroke="#008000"><circle cx="323" cy="13" r="12.500"/><circle cx="572" cy="13" r="12.500"/><circle cx="13" cy="376" r="12.500"/></g>
<path d="M75.500 0v2000M323.500 0v2000M572.500 0v2000M0 375.500h3000" stroke="#f00"/>
<path d="M265.500 7v370" stroke="#ff0"/>
<g class="mark"><text x="320" y="19">8</text><text x="569" y="19">9</text><text x="9" y="382">G</text></g>
<path d="M55 539l4 10h-2v40h-4v-40h-2z" fill="#0f0"/>
<text x="64" y="551" fill="#0f0" font-size="13">Y</text>
</svg>
`);

const FIELDS = [
    ['梁名称:', 'DL3(12)'], ['类别:', null], ['截面宽:', '250'], ['截面高:', '600'],
    ['箍筋信息:', 'C8@100/200(2)'], ['上下部通长筋:', '3C16;3C20'], ['梁侧面钢筋:', 'G4C14'], ['标高:', '-0.800']
];
define('beam-dialog', (el) => `
<style>
/* floats over the toolbars and the drawing */
:host {
    position: absolute;
    left: 387px;
    top: 80px;
    box-sizing: border-box;
    width: 248px;
    border: 3px solid #0a3fe0;
    border-top: 0;
    border-color: #0a3fe0 #001ea0 #001ea0 #0a3fe0;
    border-radius: 7px 7px 0 0;
    background: #ece9d8;
    overflow: hidden;
}
header {
    display: flex;
    align-items: center;
    height: 32px;
    margin: 0 -3px;
    padding: 0 4px 0 6px;
    background: linear-gradient(#0a48c8, #3c90ff 3px, #0458e4 8px, #0254e8 18px, #0464fc 27px, #0040c0);
}
h1 { flex: 1; margin: 0; color: #fff; font: 500 20px/28px "Noto Sans CJK SC", sans-serif; text-shadow: 1px 1px #0a2c80; }
header button { width: 25px; height: 25px; padding: 0; border: 1px solid #fff; border-radius: 3px; background: linear-gradient(135deg, #f0a088, #e0532c 45%, #c03810); }
header svg { display: block; margin: auto; }
form { padding: 8px 8px 8px 7px; }
.field { display: flex; align-items: center; height: 20px; margin-bottom: 8px; }
label { width: 90px; line-height: 16px; }
.field input, .pick { box-sizing: border-box; width: 137px; height: 20px; border: 1px solid #7f9db9; background: #fff; }
.field input { padding: 0 2px; font: inherit; }
.pick { display: flex; align-items: center; padding: 1px 1px 1px 2px; }
.pick select { appearance: none; flex: 1; min-width: 0; height: 14px; margin-right: 3px; padding: 0; border: 1px dotted #e0a030; border-radius: 0; background: #316ac5; color: #fff; font: inherit; line-height: 12px; }
.pick i { display: grid; place-items: center; width: 16px; height: 16px; border-radius: 2px; background: linear-gradient(135deg, #dce6ff, #b4c8f8); }
.acts { display: flex; justify-content: space-between; padding: 10px 23px 0 33px; }
.acts button { width: 68px; height: 22px; padding: 0; border: 1px solid #003c74; border-radius: 3px; background: linear-gradient(#fff, #f0f0ea 80%, #d6d0c5); font: inherit; }
</style>
<header><h1>${el.getAttribute('heading')}</h1><button aria-label="关闭"><svg width="17" height="17" viewBox="0 0 17 17"><path d="M2 2l13 13M15 2l-13 13" stroke="#fff" stroke-width="3"/></svg></button></header>
<form>
${FIELDS.map(([label, value], i) => `<div class="field"><label for="f${i}">${label}</label>${value === null
        ? `<span class="pick"><select id="f${i}"><option>基础主梁</option></select><i><svg width="10" height="8" viewBox="0 0 10 8"><path d="M1 1.500l4 4 4-4" fill="none" stroke="#4d6185" stroke-width="2.500"/></svg></i></span>`
        : `<input id="f${i}" value="${value}">`}</div>`).join('')}
<div class="acts"><button type="button">确定 (<u>N</u>)</button><button type="button">取消 (<u>C</u>)</button></div>
</form>
`);
</script>
</body>
</html>
